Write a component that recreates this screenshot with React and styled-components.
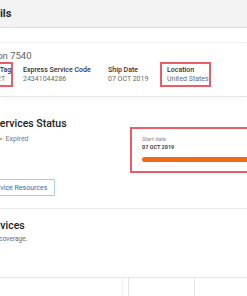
import React from "react";
import styled, { createGlobalStyle } from "styled-components";

const GlobalStyle = createGlobalStyle`
  html, body {
    margin: 0;
    padding: 0;
    background: #fff;
  }
  body {
    font-family: Roboto, "Liberation Sans", Arial, sans-serif;
    overflow: hidden;
  }
`;

const Page = styled.div`
  width: 247px;
  height: 296px;
  overflow: hidden;
  display: flex;
  flex-direction: column;
  white-space: nowrap;
`;

const Header = styled.header`
  flex-shrink: 0;
  height: 27px;
  display: flex;
  align-items: center;
  background: #f3f3f3;
  border-bottom: 1px solid #dedede;
`;

const PageTitle = styled.h1`
  margin: 0 0 0 -64.5px;
  font-size: 11px;
  line-height: 14px;
  font-weight: 700;
  color: #2b2b2b;
`;

const ProductCard = styled.section`
  flex-shrink: 0;
  margin-top: 14px;
  padding: 7px 0 9px;
  border-top: 1px solid #efefef;
  border-bottom: 1px solid #e6e6e6;
  box-shadow: 0 3px 6px rgba(0, 0, 0, 0.04);
`;

const Shifted = styled.div`
  margin-left: ${(p) => p.$shift}px;
`;

const ProductName = styled.h2`
  margin: 0 0 0 -31.5px;
  font-size: 9.5px;
  line-height: 12px;
  font-weight: 400;
  color: #626262;
`;

const SpecRow = styled.div`
  display: grid;
  grid-template-columns: 48px 85px 59px auto;
  margin-left: -32px;
`;

const Spec = styled.div`
  justify-self: start;
  display: flex;
  flex-direction: column;
  padding: 2px 0 1px 5px;
  border: 2px solid ${(p) => (p.$marked ? "#ec5c68" : "transparent")};
  font-size: 7px;
  line-height: 9px;
`;

const SpecLabel = styled.span`
  font-weight: 500;
  color: #333;
`;

const SpecValue = styled.span`
  color: #6a6a6a;
`;

const StatusSection = styled.section`
  flex-shrink: 0;
  display: flex;
  align-items: flex-start;
  padding: 20px 0 12px;
  border-bottom: 1px solid #ececec;
`;

const StatusInfo = styled.div`
  flex: 0 0 136.5px;
  display: flex;
  flex-direction: column;
  align-items: flex-start;
  margin-left: -6.5px;
`;

const SectionTitle = styled.h3`
  margin: 0;
  font-size: 10.5px;
  line-height: 14px;
  font-weight: 500;
  color: #222;
`;

const StatusLine = styled.div`
  display: flex;
  align-items: center;
  margin: 3px 0 0 6px;
  font-size: 7px;
  line-height: 10px;
  color: #777;
`;

const Dot = styled.span`
  width: 2px;
  height: 2px;
  margin-right: 4px;
  border-radius: 50%;
  background: #f07a2a;
`;

const OutlineButton = styled.button`
  height: 17px;
  margin: 35px 0 0 -12.5px;
  padding: 0 7px 0 8px;
  border: 1px solid #a9cdef;
  border-radius: 1px;
  background: #fff;
  font-family: inherit;
  font-size: 7px;
  color: #1d6fc2;
`;

const DateBox = styled.div`
  flex: 0 0 200px;
  margin-top: 10px;
  padding: 6px 0 9px 10px;
  border: 2px solid #ec5c68;
  display: flex;
  flex-direction: column;
`;

const DateLabel = styled.span`
  font-size: 5.5px;
  line-height: 8px;
  color: #8a8a8a;
`;

const DateValue = styled.span`
  font-size: 5.5px;
  line-height: 8px;
  font-weight: 700;
  color: #444;
`;

const ProgressBar = styled.div`
  height: 5px;
  margin-top: 6px;
  border-radius: 3px 0 0 3px;
  background: #ef6a17;
`;

const ServicesSection = styled.section`
  flex-shrink: 0;
  padding: 10px 0 34px;
  border-bottom: 1px solid #e4e4e4;
`;

const SectionNote = styled.p`
  margin: 2px 0 0;
  font-size: 6.5px;
  line-height: 8px;
  color: #666;
`;

const TableHead = styled.div`
  flex: 1;
  display: flex;
`;

const Column = styled.div`
  flex: 0 0 ${(p) => p.$w}px;
  border-right: 1px solid ${(p) => p.$line};
`;

export default function App() {
  return (
    <>
      <GlobalStyle />
      <Page>
        <Header>
          <PageTitle>Product Details</PageTitle>
        </Header>

        <ProductCard>
          <ProductName>Precision 7540</ProductName>
          <SpecRow>
            <Spec $marked>
              <SpecLabel>Service Tag</SpecLabel>
              <SpecValue>7QX4N2T</SpecValue>
            </Spec>
            <Spec>
              <SpecLabel>Express Service Code</SpecLabel>
              <SpecValue>24341044286</SpecValue>
            </Spec>
            <Spec>
              <SpecLabel>Ship Date</SpecLabel>
              <SpecValue>07 OCT 2019</SpecValue>
            </Spec>
            <Spec $marked>
              <SpecLabel>Location</SpecLabel>
              <SpecValue>United States</SpecValue>
            </Spec>
          </SpecRow>
        </ProductCard>

        <StatusSection>
          <StatusInfo>
            <SectionTitle>Services Status</SectionTitle>
            <StatusLine>
              <Dot />
              Expired
            </StatusLine>
            <OutlineButton>Service Resources</OutlineButton>
          </StatusInfo>
          <DateBox>
            <DateLabel>Start date</DateLabel>
            <DateValue>07 OCT 2019</DateValue>
            <ProgressBar />
          </DateBox>
        </StatusSection>

        <ServicesSection>
          <Shifted $shift={-15.5}>
            <SectionTitle>Services</SectionTitle>
            <SectionNote>Your coverage.</SectionNote>
          </Shifted>
        </ServicesSection>

        <TableHead>
          <Column $w={122} $line="#f1f1f1" />
          <Column $w={5} $line="#e3e3e3" />
          <Column $w={65} $line="#e6e6e6" />
        </TableHead>
      </Page>
    </>
  );
}
